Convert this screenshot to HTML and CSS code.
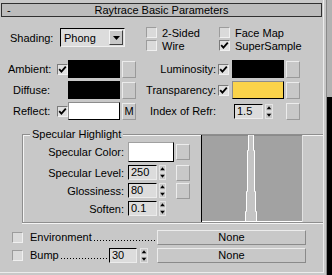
FILE: index.html
```html
<!DOCTYPE html>
<html>
<head>
<meta charset="utf-8">
<link rel="stylesheet" href="styles.css">
</head>
<body>
<div class="app">
  <div class="panel">
    <div class="titlebar"><span class="minus">-</span><span class="title">Raytrace Basic Parameters</span></div>

    <div class="shading-row">
      <span class="shading-label">Shading:</span>
      <div class="dropdown">
        <span class="dd-text">Phong</span>
        <span class="dd-btn"><svg width="7" height="4" viewBox="0 0 7 4"><polygon points="0,0 7,0 3.5,4" fill="#000"/></svg></span>
      </div>
      <div class="checks">
        <div class="chk"><span class="box"></span><span>2-Sided</span></div>
        <div class="chk"><span class="box"></span><span>Face Map</span></div>
        <div class="chk"><span class="box"></span><span>Wire</span></div>
        <div class="chk"><span class="box on"><svg width="9" height="9" viewBox="0 0 9 9"><polyline points="1.2,4.2 3.4,6.6 7.8,1.6" fill="none" stroke="#000" stroke-width="1.8"/></svg></span><span>SuperSample</span></div>
      </div>
    </div>

    <div class="colors">
      <div class="crow">
        <span class="llabel lab-amb">Ambient:</span>
        <span class="box on"><svg width="9" height="9" viewBox="0 0 9 9"><polyline points="1.2,4.2 3.4,6.6 7.8,1.6" fill="none" stroke="#000" stroke-width="1.8"/></svg></span>
        <span class="swatch black"></span>
        <span class="mapbtn"></span>
        <span class="rlabel">Luminosity:</span>
        <span class="box on rbox"><svg width="9" height="9" viewBox="0 0 9 9"><polyline points="1.2,4.2 3.4,6.6 7.8,1.6" fill="none" stroke="#000" stroke-width="1.8"/></svg></span>
        <span class="swatch black rsw"></span>
        <span class="mapbtn"></span>
      </div>
      <div class="crow">
        <span class="llabel lab-dif">Diffuse:</span>
        <span class="nobox"></span>
        <span class="swatch black"></span>
        <span class="mapbtn"></span>
        <span class="rlabel">Transparency:</span>
        <span class="box on rbox"><svg width="9" height="9" viewBox="0 0 9 9"><polyline points="1.2,4.2 3.4,6.6 7.8,1.6" fill="none" stroke="#000" stroke-width="1.8"/></svg></span>
        <span class="swatch yellow rsw"></span>
        <span class="mapbtn"></span>
      </div>
      <div class="crow">
        <span class="llabel lab-ref">Reflect:</span>
        <span class="box on"><svg width="9" height="9" viewBox="0 0 9 9"><polyline points="1.2,4.2 3.4,6.6 7.8,1.6" fill="none" stroke="#000" stroke-width="1.8"/></svg></span>
        <span class="swatch white"></span>
        <span class="mapbtn">M</span>
        <span class="rlabel">Index of Refr:</span>
        <div class="spin ior">
          <span class="field">1.5</span>
          <span class="arrows"><svg width="8" height="15" viewBox="0 0 8 15"><rect x="0.5" y="0.5" width="7" height="6.5" fill="#c8c8c8" stroke="#e4e4e4"/><rect x="0.5" y="8" width="7" height="6.5" fill="#c8c8c8" stroke="#e4e4e4"/><polygon points="4,2.2 6.3,5.2 1.7,5.2" fill="#000"/><polygon points="1.7,9.8 6.3,9.8 4,12.8" fill="#000"/></svg></span>
        </div>
        <span class="mapbtn ior-map"></span>
      </div>
    </div>

    <div class="group">
      <span class="legend">Specular Highlight</span>
      <div class="spec-left">
        <div class="srow srow-color">
          <span class="slabel">Specular Color:</span>
          <span class="swatch white specsw"></span>
          <span class="mapbtn smap"></span>
        </div>
        <div class="srow">
          <span class="slabel">Specular Level:</span>
          <div class="spin">
            <span class="field">250</span>
            <span class="arrows"><svg width="7" height="15" viewBox="0 0 7 15"><rect x="0.5" y="0.5" width="6" height="6.5" fill="#c8c8c8" stroke="#e4e4e4"/><rect x="0.5" y="8" width="6" height="6.5" fill="#c8c8c8" stroke="#e4e4e4"/><polygon points="3.5,2.2 5.8,5.2 1.2,5.2" fill="#000"/><polygon points="1.2,9.8 5.8,9.8 3.5,12.8" fill="#000"/></svg></span>
          </div>
          <span class="mapbtn smap2"></span>
        </div>
        <div class="srow">
          <span class="slabel">Glossiness:</span>
          <div class="spin">
            <span class="field">80</span>
            <span class="arrows"><svg width="7" height="15" viewBox="0 0 7 15"><rect x="0.5" y="0.5" width="6" height="6.5" fill="#c8c8c8" stroke="#e4e4e4"/><rect x="0.5" y="8" width="6" height="6.5" fill="#c8c8c8" stroke="#e4e4e4"/><polygon points="3.5,2.2 5.8,5.2 1.2,5.2" fill="#000"/><polygon points="1.2,9.8 5.8,9.8 3.5,12.8" fill="#000"/></svg></span>
          </div>
          <span class="mapbtn smap2"></span>
        </div>
        <div class="srow">
          <span class="slabel">Soften:</span>
          <div class="spin">
            <span class="field">0.1</span>
            <span class="arrows"><svg width="7" height="15" viewBox="0 0 7 15"><rect x="0.5" y="0.5" width="6" height="6.5" fill="#c8c8c8" stroke="#e4e4e4"/><rect x="0.5" y="8" width="6" height="6.5" fill="#c8c8c8" stroke="#e4e4e4"/><polygon points="3.5,2.2 5.8,5.2 1.2,5.2" fill="#000"/><polygon points="1.2,9.8 5.8,9.8 3.5,12.8" fill="#000"/></svg></span>
          </div>
        </div>
      </div>
      <svg class="graph" width="102" height="87" viewBox="0 0 102 87">
        <rect width="102" height="87" fill="#a2a2a2"/>
        <line x1="0" y1="0.5" x2="102" y2="0.5" stroke="#8a8a8a"/>
        <line x1="0.5" y1="0" x2="0.5" y2="87" stroke="#000"/>
        <line x1="101.5" y1="0" x2="101.5" y2="87" stroke="#e2e2e2"/>
        <polygon points="1,86.5 44.5,86.5 44.5,76.5 45.5,76.5 45.5,56.5 46.5,56.5 46.5,15.5 47.5,15.5 47.5,0 52.5,0 52.5,15.5 53.5,15.5 53.5,56.5 54.5,56.5 54.5,76.5 55.5,76.5 55.5,86.5 101,86.5" fill="#c4c4c4" stroke="#fff"/>
      </svg>
    </div>

    <div class="bottom">
      <div class="brow">
        <span class="box bbox"></span>
        <span class="lead env-lead"><span class="lead-text">Environment</span><span class="leader"></span></span>
        <span class="nonebtn">None</span>
      </div>
      <div class="brow">
        <span class="box bbox"></span>
        <span class="lead bump-lead"><span class="lead-text">Bump</span><span class="leader"></span></span>
        <div class="spin">
          <span class="field bump-field">30</span>
          <span class="arrows bump-arrows"><svg width="8" height="15" viewBox="0 0 8 15"><rect x="0.5" y="0.5" width="7" height="6.5" fill="#c8c8c8" stroke="#e4e4e4"/><rect x="0.5" y="8" width="7" height="6.5" fill="#c8c8c8" stroke="#e4e4e4"/><polygon points="4,2.2 6.3,5.2 1.7,5.2" fill="#000"/><polygon points="1.7,9.8 6.3,9.8 4,12.8" fill="#000"/></svg></span>
        </div>
        <span class="nonebtn bump-none">None</span>
      </div>
    </div>
  </div>
  <div class="gutter"><div class="track"></div></div>
</div>
</body>
</html>
```

FILE: styles.css
```css
* { box-sizing: border-box; }
html, body { margin: 0; padding: 0; }
body {
  background: #c8c8c8;
  font-family: "Liberation Sans", Arial, sans-serif;
  font-size: 11px;
  color: #000;
  width: 332px;
  height: 275px;
  overflow: hidden;
}
.app { display: flex; width: 332px; height: 275px; }
.panel {
  width: 324px;
  height: 273px;
  border-right: 1px solid #ececec;
  border-bottom: 1px solid #ececec;
  display: flex;
  flex-direction: column;
}
.gutter { width: 8px; height: 275px; padding-left: 2px; }
.track {
  width: 6px;
  height: 100%;
  border-left: 1px solid #8a8a8a;
  background: linear-gradient(#b2b2b2 0 97px, #000 97px);
}

/* title */
.titlebar {
  margin: 3px 1px 0 1px;
  height: 14px;
  border: 1px solid #303030;
  background: #bcbcbc;
  display: flex;
  align-items: center;
  line-height: 12px;
}
.minus { width: 12px; padding-left: 5px; }
.title { flex: 1; text-align: center; padding-right: 12px; }

/* shading */
.shading-row {
  margin-top: 9px;
  height: 26px;
  display: flex;
  align-items: flex-start;
}
.shading-label {
  width: 60px;
  padding-left: 10px;
  margin-top: 2px;
  height: 19px;
  display: flex;
  align-items: center;
}
.dropdown {
  margin-top: 2px;
  width: 65px;
  height: 19px;
  border: 1px solid;
  border-color: #000 #f0f0f0 #f0f0f0 #000;
  background: #dcdcdc;
  display: flex;
  align-items: center;
  justify-content: space-between;
  padding: 0 1px 0 3px;
}
.dd-btn {
  width: 14px;
  height: 15px;
  border: 1px solid;
  border-color: #f4f4f4 #404040 #404040 #f4f4f4;
  background: #c8c8c8;
  display: flex;
  align-items: center;
  justify-content: center;
}
.dd-btn svg { display: block; }
.checks {
  margin-left: 21px;
  display: grid;
  grid-template-columns: 73px auto;
  grid-auto-rows: 13px;
}
.chk { display: flex; align-items: center; gap: 5px; }

/* checkbox */
.box {
  width: 11px;
  height: 11px;
  flex: none;
  background: #dadada;
  border: 1px solid;
  border-color: #9c9c9c #f0f0f0 #f0f0f0 #9c9c9c;
  display: flex;
  align-items: center;
  justify-content: center;
}
.box.on { border-color: #7a7a7a #f0f0f0 #f0f0f0 #7a7a7a; background: #e0e0e0; }
.box svg { display: block; }
.nobox { width: 11px; flex: none; }

/* color rows */
.colors {
  margin-top: 8px;
  display: flex;
  flex-direction: column;
  gap: 3px;
}
.crow { display: flex; align-items: center; height: 18px; }
.llabel { width: 57px; flex: none; }
.lab-amb { padding-left: 8px; }
.lab-dif { padding-left: 13px; }
.lab-ref { padding-left: 13px; }
.swatch {
  width: 52px;
  height: 18px;
  flex: none;
  border: 1px solid;
  border-color: #8c8c8c #000 #000 #8c8c8c;
}
.black { background: #000; border-color: #000; }
.white { background: #fff; }
.yellow { background: #fad34a; }
.mapbtn {
  width: 14px;
  height: 17px;
  flex: none;
  margin-left: 2px;
  border: 1px solid;
  border-color: #ececec #9a9a9a #9a9a9a #ececec;
  display: flex;
  align-items: center;
  justify-content: center;
  line-height: 11px;
}
.rlabel { width: 80px; flex: none; text-align: right; }
.rbox { margin-left: 2px; }
.rsw { margin-left: 3px; }

/* spinner */
.spin { display: flex; align-items: center; flex: none; }
.field {
  width: 29px;
  height: 15px;
  border: 1px solid;
  border-color: #000 #ececec #ececec #000;
  background: #dcdcdc;
  padding-left: 2px;
  line-height: 13px;
}
.arrows { margin-left: 2px; display: flex; }
.arrows svg { display: block; }
.ior { margin-left: 18px; }
.ior-map { margin-left: 13px; }

/* specular group */
.group {
  position: relative;
  margin-top: 14px;
  margin-left: 22px;
  width: 301px;
  height: 89px;
  border: 1px solid #8e8e8e;
  border-right: none;
  box-shadow: inset 1px 1px 0 #f4f4f4, 0 1px 0 #f4f4f4;
  display: flex;
}
.legend {
  position: absolute;
  top: -7px;
  left: 7px;
  padding: 0 2px;
  background: #c8c8c8;
  line-height: 13px;
}
.spec-left {
  width: 178px;
  flex: none;
  padding-top: 7px;
  display: flex;
  flex-direction: column;
  gap: 3px;
}
.srow { display: flex; align-items: center; height: 15px; }
.srow-color { height: 20px; }
.slabel { width: 101px; flex: none; text-align: right; margin-right: 4px; }
.specsw { width: 46px; height: 20px; border-color: #a0a0a0 #000 #000 #a0a0a0; }
.smap { height: 16px; }
.smap2 { margin-left: 10px; height: 16px; }
.graph { display: block; flex: none; }

/* bottom rows */
.bottom {
  margin-top: 6px;
  display: flex;
  flex-direction: column;
  gap: 2px;
}
.brow { display: flex; align-items: center; height: 16px; }
.bbox { margin-left: 12px; }
.lead {
  margin-left: 7px;
  flex: none;
  display: flex;
  align-items: baseline;
  height: 14px;
  line-height: 14px;
}
.lead-text { flex: none; }
.leader {
  flex: 1;
  align-self: stretch;
  margin-left: 1px;
  background-image: linear-gradient(to right, #000 1px, transparent 1px);
  background-size: 3px 1px;
  background-repeat: repeat-x;
  background-position: 1px 10px;
}
.env-lead { width: 126px; }
.bump-lead { width: 78px; }
.bump-field { width: 28px; margin-left: 1px; }
.bump-arrows { margin-left: 3px; }
.nonebtn {
  width: 149px;
  height: 15px;
  flex: none;
  margin-left: 1px;
  border: 1px solid;
  border-color: #ececec #8a8a8a #8a8a8a #ececec;
  display: flex;
  align-items: center;
  justify-content: center;
  line-height: 12px;
}
.bump-none { margin-left: 9px; }
```
